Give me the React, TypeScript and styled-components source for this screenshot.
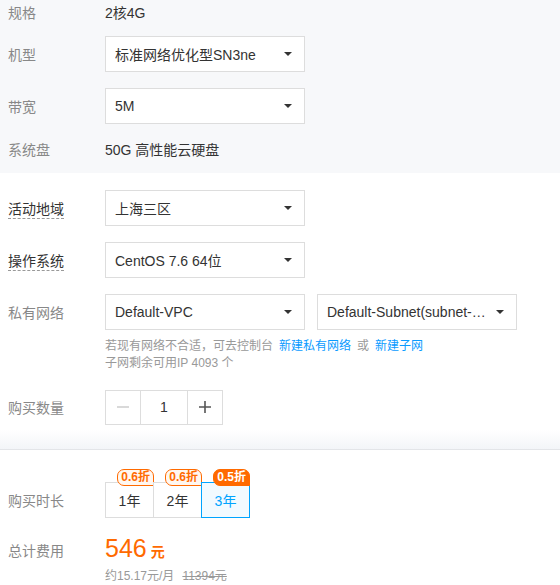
import styled, { createGlobalStyle } from 'styled-components';

const GlobalStyle = createGlobalStyle`
  html, body {
    margin: 0;
    padding: 0;
    background: #fff;
  }
  body {
    font-family: "Liberation Sans", "Noto Sans CJK SC", sans-serif;
    font-size: 14px;
    color: #333;
  }
`;

const Page = styled.div`
  width: 560px;
  height: 585px;
  overflow: hidden;
`;

const GraySection = styled.section`
  background: #f7f8fa;
  padding: 0 8px 12px;
  display: flex;
  flex-direction: column;
`;

const WhiteSection = styled.section`
  padding: 17px 8px 0;
  display: flex;
  flex-direction: column;
  gap: 16px;
`;

const Row = styled.div<{ $h?: number; $mt?: number }>`
  display: flex;
  align-items: center;
  min-height: ${(p) => p.$h ?? 36}px;
  margin-top: ${(p) => p.$mt ?? 0}px;
`;

const Label = styled.div<{ $dashed?: boolean }>`
  width: 97px;
  flex: none;
  color: ${(p) => (p.$dashed ? '#333' : '#888')};
  span {
    border-bottom: ${(p) => (p.$dashed ? '1px dashed #999' : 'none')};
    padding-bottom: 1px;
  }
`;

const Value = styled.div`
  color: #333;
`;

const Selects = styled.div`
  display: flex;
  gap: 12px;
`;

const Select = styled.div<{ $w?: number }>`
  box-sizing: border-box;
  width: ${(p) => p.$w ?? 200}px;
  height: 36px;
  border: 1px solid #dddddd;
  background: #fff;
  display: flex;
  align-items: center;
  padding: 0 12px 0 9px;
  color: #333;
  span {
    flex: 1;
    white-space: nowrap;
    overflow: hidden;
  }
`;

const Caret = styled.i`
  width: 0;
  height: 0;
  border-left: 4px solid transparent;
  border-right: 4px solid transparent;
  border-top: 4px solid #333;
  margin-left: 8px;
`;

const Hint = styled.div`
  margin-left: 97px;
  font-size: 12px;
  line-height: 17px;
  color: #999;
  margin-top: -8px;
  a {
    color: #0a9bff;
    text-decoration: none;
    margin: 0 6px;
  }
`;

const Stepper = styled.div`
  display: flex;
  height: 35px;
  border: 1px solid #dddddd;
  box-sizing: border-box;
`;

const StepBtn = styled.div<{ $w: number; $disabled?: boolean }>`
  width: ${(p) => p.$w}px;
  display: flex;
  align-items: center;
  justify-content: center;
  color: ${(p) => (p.$disabled ? '#ccc' : '#333')};
  & + & {
    border-left: 1px solid #dddddd;
  }
`;

const Shade = styled.div`
  margin-top: 5px;
  height: 19px;
  background: linear-gradient(to bottom, #ffffff, #f3f5f8);
  border-bottom: 1px solid #e3e5e8;
`;

const BottomSection = styled.section`
  padding: 32px 8px 0;
  display: flex;
  flex-direction: column;
`;

const Durations = styled.div`
  display: flex;
`;

const Duration = styled.div<{ $active?: boolean }>`
  position: relative;
  box-sizing: border-box;
  width: 49px;
  height: 36px;
  border: 1px solid ${(p) => (p.$active ? '#00a4ff' : '#dddddd')};
  background: ${(p) => (p.$active ? '#f2faff' : '#fff')};
  color: ${(p) => (p.$active ? '#00a4ff' : '#333')};
  z-index: ${(p) => (p.$active ? 1 : 0)};
  display: flex;
  align-items: center;
  justify-content: center;
  & + & {
    margin-left: -1px;
  }
`;

const Badge = styled.span<{ $solid?: boolean }>`
  position: absolute;
  top: -14px;
  right: -1px;
  box-sizing: border-box;
  height: 17px;
  line-height: 15px;
  padding: 0 3px;
  font-size: 12px;
  font-weight: bold;
  border-radius: 7px 7px 0 7px;
  border: 1px solid #ff6a00;
  background: ${(p) => (p.$solid ? '#ff6a00' : '#fff7f0')};
  color: ${(p) => (p.$solid ? '#fff' : '#ff6a00')};
  white-space: nowrap;
`;

const Price = styled.div`
  color: #ff6a00;
  font-size: 25px;
  line-height: 28px;
  small {
    font-size: 14px;
    font-weight: bold;
    margin-left: 4px;
  }
`;

const SubPrice = styled.div`
  margin-left: 97px;
  font-size: 12px;
  line-height: 17px;
  color: #999;
  s {
    margin-left: 8px;
  }
`;

export default function App() {
  return (
    <Page>
      <GlobalStyle />
      <GraySection>
        <Row $h={24}>
          <Label>规格</Label>
          <Value>2核4G</Value>
        </Row>
        <Row $mt={12}>
          <Label>机型</Label>
          <Select>
            <span>标准网络优化型SN3ne</span>
            <Caret />
          </Select>
        </Row>
        <Row $mt={16}>
          <Label>带宽</Label>
          <Select>
            <span>5M</span>
            <Caret />
          </Select>
        </Row>
        <Row $h={24} $mt={13}>
          <Label>系统盘</Label>
          <Value>50G 高性能云硬盘</Value>
        </Row>
      </GraySection>
      <WhiteSection>
        <Row>
          <Label $dashed>
            <span>活动地域</span>
          </Label>
          <Select>
            <span>上海三区</span>
            <Caret />
          </Select>
        </Row>
        <Row>
          <Label $dashed>
            <span>操作系统</span>
          </Label>
          <Select>
            <span>CentOS 7.6 64位</span>
            <Caret />
          </Select>
        </Row>
        <Row>
          <Label>私有网络</Label>
          <Selects>
            <Select>
              <span>Default-VPC</span>
              <Caret />
            </Select>
            <Select>
              <span>Default-Subnet(subnet-…</span>
              <Caret />
            </Select>
          </Selects>
        </Row>
        <Hint>
          若现有网络不合适，可去控制台<a>新建私有网络</a>或<a>新建子网</a>
          <br />
          子网剩余可用IP 4093 个
        </Hint>
        <Row $mt={1}>
          <Label>购买数量</Label>
          <Stepper>
            <StepBtn $w={34} $disabled>
              <svg width="14" height="14" viewBox="0 0 14 14">
                <path d="M1 7h12" stroke="#ccc" strokeWidth="1.5" />
              </svg>
            </StepBtn>
            <StepBtn $w={46}>1</StepBtn>
            <StepBtn $w={34}>
              <svg width="14" height="14" viewBox="0 0 14 14">
                <path d="M1 7h12M7 1v12" stroke="#555" strokeWidth="1.6" />
              </svg>
            </StepBtn>
          </Stepper>
        </Row>
      </WhiteSection>
      <Shade />
      <BottomSection>
        <Row>
          <Label>购买时长</Label>
          <Durations>
            <Duration>
              1年<Badge>0.6折</Badge>
            </Duration>
            <Duration>
              2年<Badge>0.6折</Badge>
            </Duration>
            <Duration $active>
              3年<Badge $solid>0.5折</Badge>
            </Duration>
          </Durations>
        </Row>
        <Row $mt={14}>
          <Label>总计费用</Label>
          <Price>
            546<small>元</small>
          </Price>
        </Row>
        <SubPrice>
          约15.17元/月<s>11394元</s>
        </SubPrice>
      </BottomSection>
    </Page>
  );
}
